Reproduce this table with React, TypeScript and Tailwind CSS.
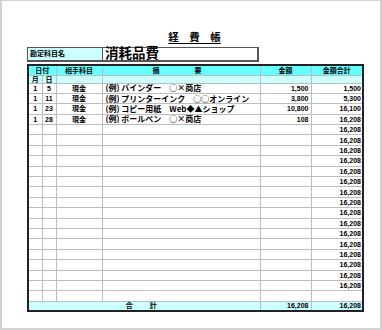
import React from 'react';

interface Row {
  m?: string;
  d?: string;
  acct?: string;
  desc?: string;
  amt?: string;
  total?: string;
}

const entries: Row[] = [
  { m: '1', d: '5', acct: '現金', desc: '(例) バインダー　○×商店', amt: '1,500', total: '1,500' },
  { m: '1', d: '11', acct: '現金', desc: '(例) プリンターインク　○○オンライン', amt: '3,800', total: '5,300' },
  { m: '1', d: '23', acct: '現金', desc: '(例) コピー用紙　Web◆▲ショップ', amt: '10,800', total: '16,100' },
  { m: '1', d: '28', acct: '現金', desc: '(例) ボールペン　○×商店', amt: '108', total: '16,208' },
];

// blank lines still carry the running total, except the very last one
const rows: Row[] = [
  ...entries,
  ...Array.from({ length: 16 }, () => ({ total: '16,208' })),
  {},
];

const cell = 'border border-[#bdbdbd] p-0 leading-none';

function App() {
  return (
    <div className="w-[382px] h-[330px] bg-white border-2 border-t border-[#d2d2d2] pt-[30px] pl-[25px] font-['Liberation_Sans','Noto_Sans_CJK_JP',sans-serif] text-black">
      {/* title */}
      <div className="w-[335px] h-[13px] text-center text-[10.5px] leading-[13px] font-bold">
        <span className="underline underline-offset-2">経　費　帳</span>
      </div>

      {/* account name */}
      <div className="mt-[3px] w-[232px] h-[15px] flex border border-[#555] border-r-2 border-b-2">
        <div className="w-[74px] bg-[#ccffff] flex items-center pl-[2px] text-[7px] font-bold">勘定科目名</div>
        <div className="flex-1 bg-white border-l border-[#555] flex items-center pl-[2px] text-[13.5px] font-bold leading-none">
          消耗品費
        </div>
      </div>

      {/* ledger */}
      <table className="mt-[2px] w-[335px] table-fixed border-collapse border-2 border-[#222] text-[7px] font-bold">
        <colgroup>
          <col className="w-[14px]" />
          <col className="w-[14px]" />
          <col className="w-[46px]" />
          <col className="w-[158px]" />
          <col className="w-[51px]" />
          <col className="w-[52px]" />
        </colgroup>
        <thead>
          <tr className="h-[10px] bg-[#66ffff]">
            <th colSpan={2} className={cell}>日付</th>
            <th className={cell}>相手科目</th>
            <th className={cell}>
              <div className="flex justify-center gap-[35px] pr-[8px]">
                <span>摘</span>
                <span>要</span>
              </div>
            </th>
            <th className={cell}>金額</th>
            <th className={cell}>金額合計</th>
          </tr>
          <tr className="h-[8px] bg-[#ccffff]">
            <td className={`${cell} text-center`}>月</td>
            <td className={`${cell} text-center`}>日</td>
            <td className={cell} />
            <td className={cell} />
            <td className={cell} />
            <td className={cell} />
          </tr>
        </thead>
        <tbody>
          {rows.map((r, i) => (
            <tr key={i} className="h-[10.4px]">
              <td className={`${cell} text-center`}>{r.m}</td>
              <td className={`${cell} text-center`}>{r.d}</td>
              <td className={`${cell} text-center`}>{r.acct}</td>
              <td className={`${cell} pl-[3px] text-[8px] whitespace-nowrap overflow-hidden font-['Noto_Sans_CJK_JP',sans-serif]`}>
                {r.desc}
              </td>
              <td className={`${cell} text-right pr-[2px]`}>{r.amt}</td>
              <td className={`${cell} text-right pr-[1px]`}>{r.total}</td>
            </tr>
          ))}
          <tr className="h-[10px] bg-[#ccffff]">
            <td colSpan={4} className={cell}>
              <div className="flex justify-center gap-[17px] pr-[6px]">
                <span>合</span>
                <span>計</span>
              </div>
            </td>
            <td className={`${cell} text-right pr-[2px]`}>16,208</td>
            <td className={`${cell} text-right pr-[1px]`}>16,208</td>
          </tr>
        </tbody>
      </table>
    </div>
  );
}

export default App;
